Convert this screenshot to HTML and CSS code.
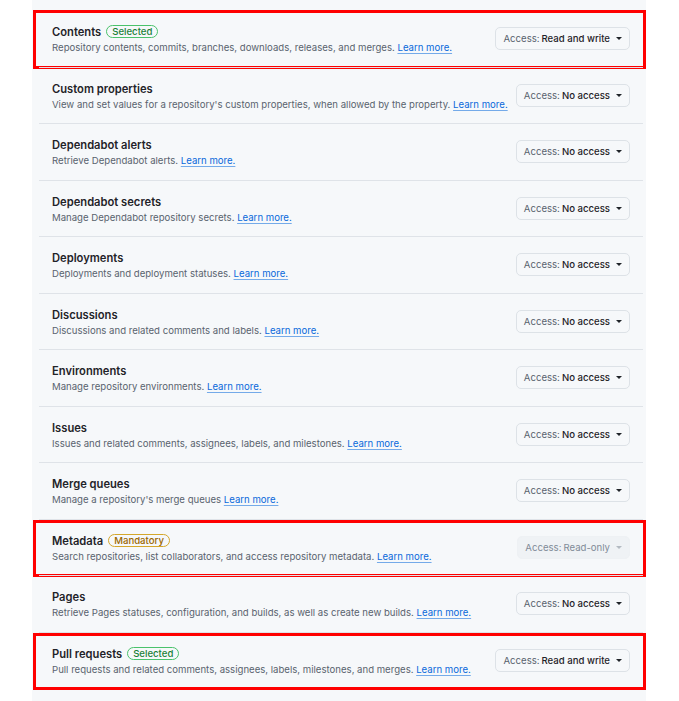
FILE: index.html
```html
<!DOCTYPE html>
<html>
<head>
<meta charset="utf-8">
<link rel="stylesheet" href="styles.css">
</head>
<body>
<div class="panel">
  <ul class="perms">
    <li class="row hl">
      <div class="info">
        <div class="title">Contents <span class="badge sel">Selected</span></div>
        <div class="desc">Repository contents, commits, branches, downloads, releases, and merges. <a href="#">Learn more.</a></div>
      </div>
      <button class="access"><span class="lbl">Access:</span><span class="val">Read and write</span><span class="caret"></span></button>
    </li>
    <li class="row">
      <div class="info">
        <div class="title">Custom properties</div>
        <div class="desc">View and set values for a repository's custom properties, when allowed by the property. <a href="#">Learn more.</a></div>
      </div>
      <button class="access"><span class="lbl">Access:</span><span class="val">No access</span><span class="caret"></span></button>
    </li>
    <li class="row">
      <div class="info">
        <div class="title">Dependabot alerts</div>
        <div class="desc">Retrieve Dependabot alerts. <a href="#">Learn more.</a></div>
      </div>
      <button class="access"><span class="lbl">Access:</span><span class="val">No access</span><span class="caret"></span></button>
    </li>
    <li class="row">
      <div class="info">
        <div class="title">Dependabot secrets</div>
        <div class="desc">Manage Dependabot repository secrets. <a href="#">Learn more.</a></div>
      </div>
      <button class="access"><span class="lbl">Access:</span><span class="val">No access</span><span class="caret"></span></button>
    </li>
    <li class="row">
      <div class="info">
        <div class="title">Deployments</div>
        <div class="desc">Deployments and deployment statuses. <a href="#">Learn more.</a></div>
      </div>
      <button class="access"><span class="lbl">Access:</span><span class="val">No access</span><span class="caret"></span></button>
    </li>
    <li class="row">
      <div class="info">
        <div class="title">Discussions</div>
        <div class="desc">Discussions and related comments and labels. <a href="#">Learn more.</a></div>
      </div>
      <button class="access"><span class="lbl">Access:</span><span class="val">No access</span><span class="caret"></span></button>
    </li>
    <li class="row">
      <div class="info">
        <div class="title">Environments</div>
        <div class="desc">Manage repository environments. <a href="#">Learn more.</a></div>
      </div>
      <button class="access"><span class="lbl">Access:</span><span class="val">No access</span><span class="caret"></span></button>
    </li>
    <li class="row">
      <div class="info">
        <div class="title">Issues</div>
        <div class="desc">Issues and related comments, assignees, labels, and milestones. <a href="#">Learn more.</a></div>
      </div>
      <button class="access"><span class="lbl">Access:</span><span class="val">No access</span><span class="caret"></span></button>
    </li>
    <li class="row">
      <div class="info">
        <div class="title">Merge queues</div>
        <div class="desc">Manage a repository's merge queues <a href="#">Learn more.</a></div>
      </div>
      <button class="access"><span class="lbl">Access:</span><span class="val">No access</span><span class="caret"></span></button>
    </li>
    <li class="row hl">
      <div class="info">
        <div class="title">Metadata <span class="badge mand">Mandatory</span></div>
        <div class="desc">Search repositories, list collaborators, and access repository metadata. <a href="#">Learn more.</a></div>
      </div>
      <button class="access disabled"><span class="lbl">Access:</span><span class="val">Read-only</span><span class="caret"></span></button>
    </li>
    <li class="row">
      <div class="info">
        <div class="title">Pages</div>
        <div class="desc">Retrieve Pages statuses, configuration, and builds, as well as create new builds. <a href="#">Learn more.</a></div>
      </div>
      <button class="access"><span class="lbl">Access:</span><span class="val">No access</span><span class="caret"></span></button>
    </li>
    <li class="row hl">
      <div class="info">
        <div class="title">Pull requests <span class="badge sel">Selected</span></div>
        <div class="desc">Pull requests and related comments, assignees, labels, milestones, and merges. <a href="#">Learn more.</a></div>
      </div>
      <button class="access"><span class="lbl">Access:</span><span class="val">Read and write</span><span class="caret"></span></button>
    </li>
  </ul>
</div>
</body>
</html>
```
FILE: styles.css
```css
html, body {
  margin: 0;
  padding: 0;
  background: #ffffff;
  height: 701px;
  overflow: hidden;
}
body {
  font-family: Inter, "Noto Sans", "Liberation Sans", sans-serif;
  color: #1f2328;
}
.panel {
  margin-left: 32px;
  width: 614px;
  height: 701px;
  background: #f6f8fa;
  box-sizing: border-box;
  padding: 10px 3px 0 7px;
}
.perms {
  list-style: none;
  margin: 0;
  padding: 0;
}
.row {
  position: relative;
  height: 56.5px;
  box-sizing: border-box;
  border-top: 1px solid #dfe3e8;
  display: flex;
  align-items: center;
  justify-content: space-between;
  padding: 0 13px;
}
.row:first-child {
  border-top: none;
}
.row.hl::after {
  content: "";
  position: absolute;
  left: -6px;
  right: -3px;
  top: 0;
  bottom: -2px;
  border: 3px solid #ff0000;
  pointer-events: none;
}
.info {
  padding-top: 2px;
}
.title {
  font-size: 11.2px;
  font-weight: 600;
  line-height: 16px;
  display: flex;
  align-items: center;
  gap: 5px;
}
.badge {
  display: inline-block;
  font-size: 9.6px;
  font-weight: 500;
  line-height: 11px;
  padding: 0 5px;
  border-radius: 8px;
  border: 1px solid;
}
.badge.sel {
  color: #1a7f37;
  border-color: #4ac26b;
}
.badge.mand {
  color: #9a6700;
  border-color: #d4a72c;
}
.desc {
  font-size: 9.6px;
  line-height: 15px;
  color: #59636e;
  white-space: nowrap;
}
.desc a {
  color: #0969da;
  text-decoration: underline;
  text-decoration-color: rgba(9, 105, 218, 0.55);
  text-underline-offset: 2px;
}
.access {
  flex: none;
  font-family: inherit;
  height: 23px;
  box-sizing: border-box;
  border: 1px solid #dde2e7;
  border-radius: 5px;
  background: #f6f8fa;
  padding: 0 7px;
  display: flex;
  align-items: center;
  font-size: 9.6px;
  white-space: nowrap;
}
.lbl {
  color: #59636e;
  margin-right: 2px;
}
.val {
  color: #1f2328;
  font-weight: 500;
}
.caret {
  width: 0;
  height: 0;
  margin-left: 6px;
  border-left: 3.5px solid transparent;
  border-right: 3.5px solid transparent;
  border-top: 3.5px solid #1f2328;
}
.access.disabled {
  background: #eff2f5;
  border-color: #eef1f4;
}
.access.disabled .lbl,
.access.disabled .val {
  color: #818b98;
  font-weight: 400;
}
.access.disabled .caret {
  border-top-color: #b3bac2;
}
```
